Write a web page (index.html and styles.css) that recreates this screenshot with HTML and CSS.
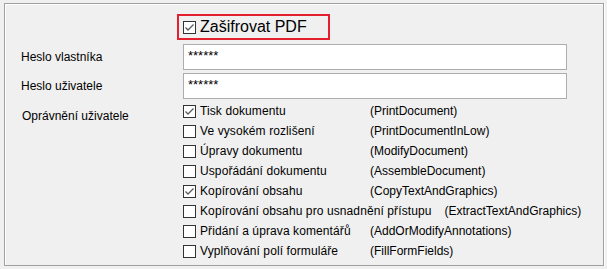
FILE: index.html
```html
<!DOCTYPE html>
<html lang="cs">
<head>
<meta charset="utf-8">
<title>Zašifrovat PDF</title>
<link rel="stylesheet" href="styles.css">
</head>
<body>
<div class="group">
  <div class="header">
    <span class="cb checked"><svg viewBox="0 0 11 11" width="11" height="11"><polyline points="1.5,5.5 4,8 9.5,2.5" fill="none" stroke="#5a5a5a" stroke-width="1.3"/></svg></span>
    <span class="header-text">Zašifrovat PDF</span>
  </div>
  <div class="field first">
    <span class="flabel">Heslo vlastníka</span>
    <div class="input">******</div>
  </div>
  <div class="field">
    <span class="flabel">Heslo uživatele</span>
    <div class="input">******</div>
  </div>
  <div class="perms">
    <span class="plabel">Oprávnění uživatele</span>
    <div class="list">
      <div class="row"><span class="cb checked"><svg viewBox="0 0 11 11" width="11" height="11"><polyline points="1.5,5.5 4,8 9.5,2.5" fill="none" stroke="#5a5a5a" stroke-width="1.3"/></svg></span><span class="lbl">Tisk dokumentu</span><span class="code">(PrintDocument)</span></div>
      <div class="row"><span class="cb"></span><span class="lbl">Ve vysokém rozlišení</span><span class="code">(PrintDocumentInLow)</span></div>
      <div class="row"><span class="cb"></span><span class="lbl">Úpravy dokumentu</span><span class="code">(ModifyDocument)</span></div>
      <div class="row"><span class="cb"></span><span class="lbl">Uspořádání dokumentu</span><span class="code">(AssembleDocument)</span></div>
      <div class="row"><span class="cb checked"><svg viewBox="0 0 11 11" width="11" height="11"><polyline points="1.5,5.5 4,8 9.5,2.5" fill="none" stroke="#5a5a5a" stroke-width="1.3"/></svg></span><span class="lbl">Kopírování obsahu</span><span class="code">(CopyTextAndGraphics)</span></div>
      <div class="row"><span class="cb"></span><span class="lbl">Kopírování obsahu pro usnadnění přístupu</span><span class="code">(ExtractTextAndGraphics)</span></div>
      <div class="row"><span class="cb"></span><span class="lbl">Přidání a úprava komentářů</span><span class="code">(AddOrModifyAnnotations)</span></div>
      <div class="row"><span class="cb"></span><span class="lbl">Vyplňování polí formuláře</span><span class="code">(FillFormFields)</span></div>
    </div>
  </div>
</div>
</body>
</html>
```

FILE: styles.css
```css
html, body {
  margin: 0;
  padding: 0;
  background: #f0f0f0;
}
body {
  font-family: "Liberation Sans", Arial, sans-serif;
  font-size: 12px;
  color: #000;
}
.group {
  box-sizing: border-box;
  margin: 3px 0 0 4px;
  width: 600px;
  height: 263px;
  border: 1px solid #a0a0a0;
  box-shadow: inset 1px 1px 0 #fff, 1px 1px 0 #fff;
  padding-top: 10px;
}
.header {
  box-sizing: border-box;
  margin-left: 172px;
  width: 153px;
  height: 26px;
  border: 2px solid #e5202e;
  display: flex;
  align-items: center;
  padding-left: 4px;
  gap: 4px;
}
.header-text {
  font-size: 16px;
  line-height: 20px;
}
.cb {
  box-sizing: border-box;
  width: 13px;
  height: 13px;
  flex: none;
  border: 1px solid #333;
  background: #fff;
  display: flex;
  align-items: center;
  justify-content: center;
}
.cb svg { display: block; }
.field {
  display: grid;
  grid-template-columns: 178px 384px;
  align-items: center;
  margin-top: 3px;
}
.field.first { margin-top: 4px; }
.flabel { padding-left: 16px; }
.input {
  box-sizing: border-box;
  height: 26px;
  background: #fff;
  border: 1px solid #adadad;
  padding: 3px 4px 0;
  font-size: 13px;
  line-height: 15px;
}
.perms {
  display: grid;
  grid-template-columns: 178px auto;
  margin-top: 2px;
}
.plabel {
  padding-left: 17px;
  padding-top: 5px;
  line-height: 20px;
}
.list {
  display: flex;
  flex-direction: column;
}
.row {
  display: flex;
  align-items: center;
  height: 20px;
  line-height: 20px;
}
.row .cb { margin-right: 4px; }
.lbl {
  min-width: 157px;
  margin-right: 13px;
  letter-spacing: 0.1px;
}
```
